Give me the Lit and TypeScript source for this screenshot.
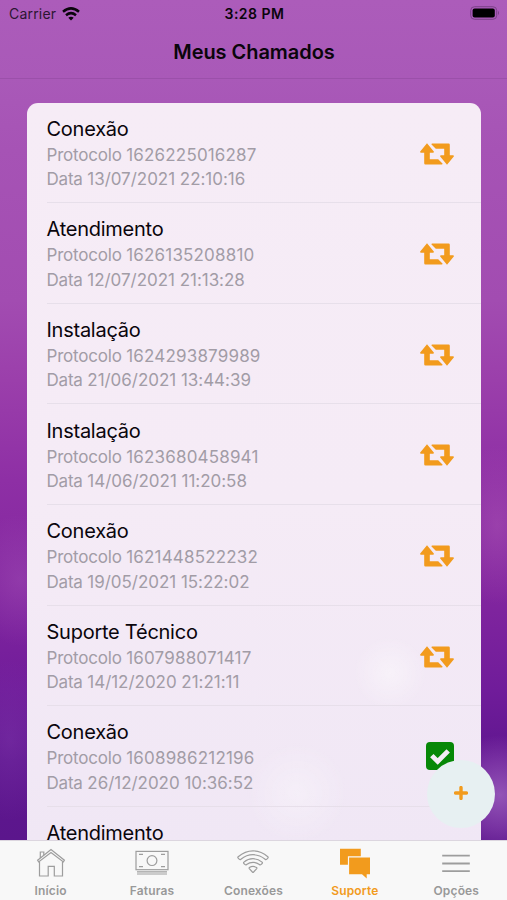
import { LitElement, html, css, svg } from "lit";
import { customElement } from "lit/decorators.js";

type Ticket = { title: string; protocol: string; date: string; done?: boolean };

const tickets: Ticket[] = [
  { title: "Conexão", protocol: "1626225016287", date: "13/07/2021 22:10:16" },
  { title: "Atendimento", protocol: "1626135208810", date: "12/07/2021 21:13:28" },
  { title: "Instalação", protocol: "1624293879989", date: "21/06/2021 13:44:39" },
  { title: "Instalação", protocol: "1623680458941", date: "14/06/2021 11:20:58" },
  { title: "Conexão", protocol: "1621448522232", date: "19/05/2021 15:22:02" },
  { title: "Suporte Técnico", protocol: "1607988071417", date: "14/12/2020 21:21:11" },
  { title: "Conexão", protocol: "1608986212196", date: "26/12/2020 10:36:52", done: true },
  { title: "Atendimento", protocol: "", date: "" },
];

const retweet = html`<svg class="retweet" viewBox="0 0 34 22" width="34" height="22">
  <path d="M7 0.3 L13.8 8.4 Q14.3 9.8 12.9 9.8 H9.8 V16.3 H18.2 L22.5 20.4 Q22.8 21.4 21.8 21.4 H5.4 Q4.2 21.4 4.2 20.2 V9.8 H1.1 Q-0.3 9.8 0.2 8.4 Z"/>
  <path d="M27 21.7 L20.2 13.6 Q19.7 12.2 21.1 12.2 H24.2 V5.7 H15.8 L11.5 1.6 Q11.2 0.6 12.2 0.6 H28.6 Q29.8 0.6 29.8 1.8 V12.2 H32.9 Q34.3 12.2 33.8 13.6 Z"/>
</svg>`;

const check = html`<svg class="check" viewBox="0 0 28 28" width="28" height="28">
  <rect width="28" height="28" rx="4" fill="#078807"/>
  <path d="M5.8 13.6 L11.7 19.4 L22.2 8.9" fill="none" stroke="#f4ecf6" stroke-width="4.8"/>
</svg>`;

const icons = {
  home: svg`<path d="M8.5 12.5 V27 H17.2 V17.4 H23.3 V27 H31.5 V12.5"/><path d="M6.6 11.2 L20 0.6 L33.4 11.2 L32.4 12.9 L20 3.4 L7.6 12.9 Z"/><path d="M9.3 9 V3 H12.8 V6.2"/>`,
  money: svg`<rect x="4" y="2.4" width="32" height="18.3"/><circle cx="20" cy="11.6" r="4.9"/><path d="M7 5.4 H11 M29 5.4 H33 M7 17.7 H11 M29 17.7 H33 M5 22.8 H35 M5 25 H35"/>`,
  wifi: svg`<path d="M5.2 9.2 Q4.4 8.4 5.2 7.7 Q12 1.8 20 1.8 Q28 1.8 34.8 7.7 Q35.6 8.4 34.8 9.2 L33.6 10.4 Q32.9 11 32.1 10.3 Q26.5 5.7 20 5.7 Q13.5 5.7 7.9 10.3 Q7.1 11 6.4 10.4 Z"/><path d="M10.9 14.5 Q10.2 13.8 10.9 13.1 Q15 9.7 20 9.7 Q25 9.7 29.1 13.1 Q29.8 13.8 29.1 14.5 L27.9 15.6 Q27.2 16.2 26.4 15.5 Q23.5 13.3 20 13.3 Q16.5 13.3 13.6 15.5 Q12.8 16.2 12.1 15.6 Z"/><path d="M16.3 19.6 Q15.8 19 16.4 18.6 Q20 16.3 23.6 18.6 Q24.2 19 23.7 19.6 L20.6 23 Q20 23.6 19.4 23 Z"/>`,
  chat: svg`<path class="fill" d="M5 -0.3 H25.8 V7.2 H12.9 V15.8 H5 Z"/><path class="fill" d="M14.1 8.6 H35 V25.2 H31.7 V29.6 L27 25.2 H14.1 Z"/>`,
  menu: svg`<path class="thick" d="M6.2 6.7 H33.8 M6.2 14.5 H33.8 M6.2 22.2 H33.8"/>`,
};

@customElement("app-root")
export class AppRoot extends LitElement {
  static styles = css`
    :host {
      display: flex;
      flex-direction: column;
      position: relative;
      width: 507px;
      height: 900px;
      overflow: hidden;
      font-family: Inter, "Liberation Sans", sans-serif;
      color: #0a050c;
      background:
        radial-gradient(circle at 500px 795px, rgba(170, 110, 200, 0.7), rgba(170, 100, 200, 0.35) 34px, transparent 60px),
        radial-gradient(ellipse 44px 80px at 497px 525px, rgba(180, 95, 185, 0.4), transparent),
        radial-gradient(ellipse 50px 66px at 20px 580px, rgba(165, 85, 185, 0.4), transparent),
        radial-gradient(ellipse 50px 80px at 10px 740px, rgba(130, 60, 175, 0.4), transparent),
        linear-gradient(#ac5cba 0, #a959b8 78px, #a653b5 150px, #a24cb1 300px, #9b3fab 380px, #8e2fa5 480px, #82269f 590px, #701c9a 690px, #5f168f 760px, #5b168c 840px);
    }
    .status {
      display: grid;
      grid-template-columns: 1fr auto 1fr;
      align-items: center;
      height: 28px;
      flex: none;
      padding: 0 7px 0 9px;
    }
    .carrier { display: flex; align-items: center; gap: 6px; font-size: 14px; letter-spacing: 0.2px; color: #2c1632; margin-top: -1px; }
    .clock { font-size: 14px; font-weight: 600; letter-spacing: 0.5px; margin-top: -1px; }
    .battery { justify-self: end; margin-top: -2px; }
    .header {
      flex: none;
      height: 50px;
      display: flex;
      justify-content: center;
      align-items: center;
      border-bottom: 1px solid #9b50aa;
      font-size: 20px;
      font-weight: 600;
      letter-spacing: -0.05px;
    }
    .title { margin: -2px 0 0 1px; }
    .content { flex: 1; min-height: 0; overflow: hidden; padding: 23.6px 26px 0 26.5px; }
    .card {
      border-radius: 11px 11px 0 0;
      overflow: hidden;
      background:
        radial-gradient(circle at 363px 570px, rgba(255, 255, 255, 0.4), transparent 36px),
        radial-gradient(circle at 270px 690px, rgba(255, 255, 255, 0.3), transparent 50px),
        linear-gradient(#f6ecf6 0, #f5ebf6 400px, #f0e7f5 740px);
    }
    .row {
      box-sizing: border-box;
      height: 100.6px;
      margin-left: 20px;
      padding: 13.3px 27.5px 0 0;
      display: flex;
      justify-content: space-between;
      border-bottom: 1px solid #e7dfea;
    }
    .name { font-size: 20px; line-height: 27px; letter-spacing: -0.25px; }
    .meta { font-size: 17px; line-height: 24.4px; color: #a29ca6; letter-spacing: -0.2px; white-space: nowrap; }
    .protocol { letter-spacing: 0.17px; }
    .date { letter-spacing: -0.03px; }
    .retweet { fill: #f29b1d; margin-top: 26.7px; }
    .check { margin-top: 22.3px; }
    .fab {
      box-sizing: border-box;
      position: absolute;
      left: 427px;
      top: 760px;
      width: 68px;
      height: 68px;
      padding: 0 1px 2px 0;
      border-radius: 50%;
      background: #e7f0f2;
      display: grid;
      place-items: center;
    }
    .tabs {
      flex: none;
      height: 59px;
      display: grid;
      grid-template-columns: repeat(5, 1fr);
      background: #f8f8f8;
      border-top: 1px solid #dcd6df;
    }
    .tab { display: flex; flex-direction: column; align-items: center; padding-top: 8px; color: #999; font-size: 12px; font-weight: 600; letter-spacing: 0.15px; }
    .tab svg { display: block; overflow: visible; fill: none; stroke: #9d9d9d; stroke-width: 1.2; }
    .tab .thick { stroke-width: 1.8; }
    .tab .fill { fill: #f29b1d; stroke: none; }
    .label { line-height: 16px; margin-top: 6px; }
    .tab.active { color: #f29b1d; }
  `;

  private tab(icon: unknown, label: string, active = false) {
    return html`<div class="tab ${active ? "active" : ""}">
      <svg viewBox="0 0 40 28" width="40" height="28">${icon}</svg>
      <span class="label">${label}</span>
    </div>`;
  }

  render() {
    return html`
      <div class="status">
        <div class="carrier"><span>Carrier</span>
          <svg width="18" height="14" viewBox="0 0 18 14" fill="none" stroke="#0a050c" stroke-width="2.5">
            <path d="M1 4.8 Q9 -2 17 4.8"/><path d="M4 8.2 Q9 4 14 8.2"/>
            <path d="M6.3 10.8 Q9 8.6 11.7 10.8 L9 13.6 Z" fill="#0a050c" stroke="none"/>
          </svg>
        </div>
        <div class="clock">3:28 PM</div>
        <svg class="battery" width="30" height="14" viewBox="0 0 30 14">
          <rect x="0.7" y="0.7" width="26" height="12.6" rx="3.8" fill="none" stroke="#7c4288"/>
          <rect x="2.6" y="2.6" width="22.2" height="8.8" rx="2" fill="#000"/>
          <path d="M28 4.8 Q30 7 28 9.2 Z" fill="#7c4288"/>
        </svg>
      </div>
      <div class="header"><span class="title">Meus Chamados</span></div>
      <div class="content">
        <div class="card">
          ${tickets.map(
            (t) => html`<div class="row">
              <div>
                <div class="name">${t.title}</div>
                ${t.protocol
                  ? html`<div class="meta">Protocolo <span class="protocol">${t.protocol}</span></div>
                      <div class="meta">Data <span class="date">${t.date}</span></div>`
                  : ""}
              </div>
              ${t.done ? check : t.protocol ? retweet : ""}
            </div>`
          )}
        </div>
      </div>
      <div class="fab">
        <svg width="14" height="14" viewBox="0 0 14 14"><path d="M7 1.6 V12.4 M1.6 7 H12.4" stroke="#f29b1d" stroke-width="3.4" stroke-linecap="round"/></svg>
      </div>
      <div class="tabs">
        ${this.tab(icons.home, "Início")} ${this.tab(icons.money, "Faturas")} ${this.tab(icons.wifi, "Conexões")}
        ${this.tab(icons.chat, "Suporte", true)} ${this.tab(icons.menu, "Opções")}
      </div>
    `;
  }
}
